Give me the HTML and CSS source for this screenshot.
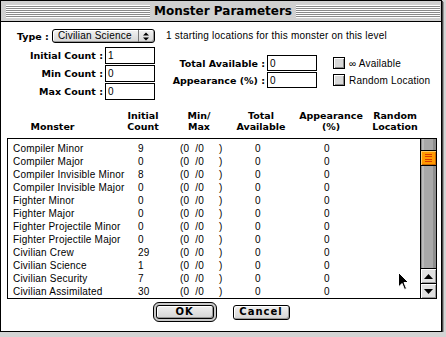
FILE: index.html
```html
<!DOCTYPE html>
<html lang="en">
<head>
  <meta charset="UTF-8">
  <title>Monster Parameters</title>
  <link rel="stylesheet" href="styles.css">
</head>
<body>

  <div class="window">
    <!-- Title bar -->
    <div class="titlebar">
      <div class="stripes"></div>
      <div class="title">Monster Parameters</div>
      <div class="stripes"></div>
    </div>

    <div class="content">
      <!-- Top controls -->
      <div class="top">
        <div class="left">
          <div class="type-row">
            <span class="label">Type :</span>
            <div class="popup">
              <span class="popup-text">Civilian Science</span>
              <span class="popup-arrows">
                <svg width="6" height="9" viewBox="0 0 6 9"><path d="M0 3.5 L3 0.5 L6 3.5 Z M0 5.5 L3 8.5 L6 5.5 Z" fill="#000"/></svg>
              </span>
            </div>
          </div>
          <div class="counts">
            <span class="label">Initial Count :</span><div class="field">1</div>
            <span class="label">Min Count :</span><div class="field">0</div>
            <span class="label">Max Count :</span><div class="field">0</div>
          </div>
        </div>

        <div class="right">
          <p class="note">1 starting locations for this monster on this level</p>
          <div class="totals">
            <span class="label">Total Available :</span><div class="field">0</div>
            <div class="check"><span class="box"></span>∞ Available</div>
            <span class="label">Appearance (%) :</span><div class="field">0</div>
            <div class="check"><span class="box"></span>Random Location</div>
          </div>
        </div>
      </div>

      <!-- Column headers -->
      <div class="headers">
        <div class="h h-monster">Monster</div>
        <div class="h h-initial">Initial<br>Count</div>
        <div class="h h-minmax">Min/<br>Max</div>
        <div class="h h-total">Total<br>Available</div>
        <div class="h h-appear">Appearance<br>(%)</div>
        <div class="h h-random">Random<br>Location</div>
      </div>

      <!-- Monster list -->
      <div class="list">
        <div class="rows">
          <div class="row"><span>Compiler Minor</span><span>9</span><span class="mm">(0  /0     )</span><span>0</span><span>0</span></div>
          <div class="row"><span>Compiler Major</span><span>0</span><span class="mm">(0  /0     )</span><span>0</span><span>0</span></div>
          <div class="row"><span>Compiler Invisible Minor</span><span>8</span><span class="mm">(0  /0     )</span><span>0</span><span>0</span></div>
          <div class="row"><span>Compiler Invisible Major</span><span>0</span><span class="mm">(0  /0     )</span><span>0</span><span>0</span></div>
          <div class="row"><span>Fighter Minor</span><span>0</span><span class="mm">(0  /0     )</span><span>0</span><span>0</span></div>
          <div class="row"><span>Fighter Major</span><span>0</span><span class="mm">(0  /0     )</span><span>0</span><span>0</span></div>
          <div class="row"><span>Fighter Projectile Minor</span><span>0</span><span class="mm">(0  /0     )</span><span>0</span><span>0</span></div>
          <div class="row"><span>Fighter Projectile Major</span><span>0</span><span class="mm">(0  /0     )</span><span>0</span><span>0</span></div>
          <div class="row"><span>Civilian Crew</span><span>29</span><span class="mm">(0  /0     )</span><span>0</span><span>0</span></div>
          <div class="row"><span>Civilian Science</span><span>1</span><span class="mm">(0  /0     )</span><span>0</span><span>0</span></div>
          <div class="row"><span>Civilian Security</span><span>7</span><span class="mm">(0  /0     )</span><span>0</span><span>0</span></div>
          <div class="row"><span>Civilian Assimilated</span><span>30</span><span class="mm">(0  /0     )</span><span>0</span><span>0</span></div>
        </div>
        <div class="scrollbar">
          <div class="track">
            <div class="thumb"><span></span><span></span><span></span><span></span></div>
          </div>
          <div class="arrow">
            <svg width="9" height="5" viewBox="0 0 9 5"><path d="M0 5 L4.5 0 L9 5 Z" fill="#000"/></svg>
          </div>
          <div class="arrow">
            <svg width="9" height="5" viewBox="0 0 9 5"><path d="M0 0 L4.5 5 L9 0 Z" fill="#000"/></svg>
          </div>
        </div>
      </div>

      <!-- Buttons -->
      <div class="buttons">
        <div class="default-ring"><div class="btn">OK</div></div>
        <div class="btn btn-cancel">Cancel</div>
      </div>
    </div>

    <!-- mouse pointer over the list -->
    <svg class="cursor" width="12" height="19" viewBox="0 0 12 19">
      <path d="M0.5 0.5 L0.5 15 L4 11.5 L6.5 17.5 L8.5 16.5 L6 10.5 L10.5 10.5 Z" fill="#000" stroke="#fff" stroke-width="1"/>
    </svg>
  </div>

</body>
</html>
```

FILE: styles.css
```css
body {
  margin: 0;
  background-color: #d4d4d4;
  font-family: "Liberation Sans", Arial, sans-serif;
  font-size: 10px;
  letter-spacing: 0.2px;
  color: #000;
}

.window {
  position: relative;
  width: 442px;
  height: 332px;
  box-sizing: border-box;
  background-color: #fff;
  border: 1px solid #000;
  box-shadow: 1px 1px 0 #444, 2px 2px 0 #999;
  overflow: hidden;
}

/* ---- title bar ---- */
.titlebar {
  display: flex;
  align-items: center;
  height: 20px;
  padding: 0 1px 0 5px;
  background-color: #d0d0d0;
  border-bottom: 1px solid #000;
}

.stripes {
  flex: 1;
  height: 13px;
  background: repeating-linear-gradient(to bottom, #fff 0 1px, #8a8a8a 1px 2px);
}

.title {
  padding: 0 4px;
  font-family: "DejaVu Sans", sans-serif;
  font-weight: bold;
  font-size: 12px;
  letter-spacing: 0;
  line-height: 20px;
}

/* ---- body ---- */
.content {
  padding: 0 4px 0 6px;
}

.label {
  font-family: "DejaVu Sans", sans-serif;
  font-weight: bold;
  font-size: 9.5px;
  letter-spacing: 0;
  white-space: nowrap;
}

.top {
  display: flex;
}

.left {
  width: 152px;
}

.type-row {
  display: flex;
  align-items: center;
  height: 14px;
  margin-top: 7px;
  padding-left: 10px;
}

.popup {
  display: flex;
  width: 103px;
  height: 14px;
  margin-left: 3px;
  box-sizing: border-box;
  border: 1px solid #000;
  border-radius: 3px;
  background: linear-gradient(#f2f2f2, #d6d6d6);
  box-shadow: inset 1px 1px 0 #fff, inset -1px -1px 0 #999;
}

.popup-text {
  flex: 1;
  padding-left: 5px;
  line-height: 12px;
}

.popup-arrows {
  display: flex;
  align-items: center;
  justify-content: center;
  width: 15px;
  border-left: 1px solid #777;
}

.counts {
  display: grid;
  grid-template-columns: 96px 50px;
  column-gap: 2px;
  row-gap: 1px;
  margin-top: 4px;
  align-items: center;
}

.counts .label,
.totals .label {
  text-align: right;
}

.field {
  height: 17px;
  box-sizing: border-box;
  border: 1px solid #000;
  padding-left: 2px;
  line-height: 16px;
  background-color: #fff;
}

.right {
  margin-left: 7px;
}

.note {
  margin: 7px 0 0;
  height: 14px;
  line-height: 14px;
}

.totals {
  display: grid;
  grid-template-columns: 99px 50px auto;
  column-gap: 2px;
  row-gap: 1px;
  margin-top: 12px;
  align-items: center;
}

.totals .field {
  height: 16px;
  line-height: 15px;
}

.check {
  display: flex;
  align-items: center;
  margin-left: 14px;
}

.box {
  width: 12px;
  height: 12px;
  box-sizing: border-box;
  margin-right: 4px;
  border: 1px solid #000;
  background-color: #d8d8d8;
  box-shadow: inset 1px 1px 0 #fff, inset -1px -1px 0 #888;
}

/* ---- column headers ---- */
.headers {
  display: flex;
  align-items: flex-end;
  margin-top: 10px;
}

.h {
  font-family: "DejaVu Sans", sans-serif;
  font-weight: bold;
  font-size: 9.5px;
  letter-spacing: 0;
  line-height: 11px;
  text-align: center;
}

.h-monster { width: 91px; }
.h-initial { width: 50px; margin-left: 20px; }
.h-minmax  { width: 50px; margin-left: 6px; }
.h-total   { width: 60px; margin-left: 7px; }
.h-appear  { width: 70px; margin-left: 5px; }
.h-random  { width: 54px; margin-left: 2px; }

/* ---- list ---- */
.list {
  display: flex;
  width: 430px;
  height: 161px;
  box-sizing: border-box;
  margin-top: 6px;
  border: 1px solid #000;
}

.rows {
  flex: 1;
  padding: 3px 0 0 5px;
}

.row {
  display: grid;
  grid-template-columns: 125px 42px 75px 69px auto;
  height: 13px;
  line-height: 13px;
  white-space: nowrap;
}

.mm {
  white-space: pre;
}

.scrollbar {
  display: flex;
  flex-direction: column;
  width: 15px;
  border-left: 1px solid #000;
}

.track {
  flex: 1;
  padding-top: 11px;
  background: linear-gradient(to right, #8c8c8c 0 1px, #bcbcbc 1px 3px, #a9a9a9 3px 12px, #8e8e8e 12px);
}

.thumb {
  display: flex;
  flex-direction: column;
  align-items: center;
  justify-content: center;
  gap: 1.5px;
  height: 16px;
  box-sizing: border-box;
  border-top: 1px solid #000;
  border-bottom: 1px solid #000;
  background-color: #ff9a00;
  box-shadow: inset 1px 1px 0 #ffcc66, inset -1px -1px 0 #cc6600;
}

.thumb span {
  width: 7px;
  height: 1px;
  background-color: #d83a00;
}

.arrow {
  display: flex;
  align-items: center;
  justify-content: center;
  height: 15px;
  box-sizing: border-box;
  border-top: 1px solid #000;
  background-color: #e0e0e0;
  box-shadow: inset 1px 1px 0 #fff, inset -1px -1px 0 #999;
}

/* ---- buttons ---- */
.buttons {
  display: flex;
  align-items: center;
  justify-content: center;
  gap: 16px;
  margin-top: 3px;
  padding-right: 2px;
}

.default-ring {
  padding: 2px;
  border: 1px solid #000;
  border-radius: 6px;
  background-color: #c8c8c8;
}

.btn {
  width: 58px;
  height: 14px;
  box-sizing: border-box;
  border: 1px solid #000;
  border-radius: 3px;
  background: linear-gradient(#f0f0f0, #d4d4d4);
  box-shadow: inset 1px 1px 0 #fff, inset -1px -1px 0 #999;
  font-family: "DejaVu Sans", sans-serif;
  font-weight: bold;
  font-size: 10px;
  letter-spacing: 1px;
  line-height: 12px;
  text-align: center;
}

.btn-cancel {
  width: 57px;
  height: 15px;
}

.cursor {
  position: absolute;
  left: 397px;
  top: 271px;
}
```
